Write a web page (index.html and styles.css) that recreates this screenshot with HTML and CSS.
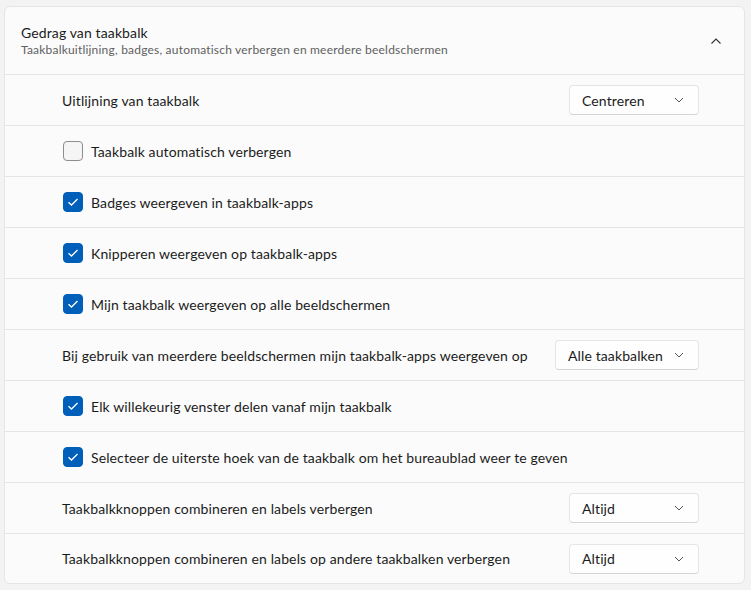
FILE: index.html
```html
<!DOCTYPE html>
<html lang="nl">
<head>
<meta charset="utf-8">
<link rel="stylesheet" href="styles.css">
</head>
<body>
<div class="card">
  <div class="header">
    <div class="htext">
      <div class="title">Gedrag van taakbalk</div>
      <div class="subtitle">Taakbalkuitlijning, badges, automatisch verbergen en meerdere beeldschermen</div>
    </div>
    <svg class="chev-up" width="12" height="8" viewBox="0 0 12 8"><path d="M1.5 6.5 L6 2 L10.5 6.5" fill="none" stroke="#333" stroke-width="1.1"/></svg>
  </div>
  <div class="row">
    <span class="label">Uitlijning van taakbalk</span>
    <div class="dropdown w130"><span>Centreren</span><svg width="10" height="6" viewBox="0 0 10 6"><path d="M1 1 L5 5 L9 1" fill="none" stroke="#555" stroke-width="1"/></svg></div>
  </div>
  <div class="row">
    <span class="cb"></span><span class="clabel">Taakbalk automatisch verbergen</span>
  </div>
  <div class="row">
    <span class="cb on"><svg width="12" height="10" viewBox="0 0 12 10"><path d="M1.5 5.2 L4.5 8 L10.5 2" fill="none" stroke="#fff" stroke-width="1.3"/></svg></span><span class="clabel">Badges weergeven in taakbalk-apps</span>
  </div>
  <div class="row">
    <span class="cb on"><svg width="12" height="10" viewBox="0 0 12 10"><path d="M1.5 5.2 L4.5 8 L10.5 2" fill="none" stroke="#fff" stroke-width="1.3"/></svg></span><span class="clabel">Knipperen weergeven op taakbalk-apps</span>
  </div>
  <div class="row">
    <span class="cb on"><svg width="12" height="10" viewBox="0 0 12 10"><path d="M1.5 5.2 L4.5 8 L10.5 2" fill="none" stroke="#fff" stroke-width="1.3"/></svg></span><span class="clabel">Mijn taakbalk weergeven op alle beeldschermen</span>
  </div>
  <div class="row">
    <span class="label">Bij gebruik van meerdere beeldschermen mijn taakbalk-apps weergeven op</span>
    <div class="dropdown w144"><span>Alle taakbalken</span><svg width="10" height="6" viewBox="0 0 10 6"><path d="M1 1 L5 5 L9 1" fill="none" stroke="#555" stroke-width="1"/></svg></div>
  </div>
  <div class="row">
    <span class="cb on"><svg width="12" height="10" viewBox="0 0 12 10"><path d="M1.5 5.2 L4.5 8 L10.5 2" fill="none" stroke="#fff" stroke-width="1.3"/></svg></span><span class="clabel">Elk willekeurig venster delen vanaf mijn taakbalk</span>
  </div>
  <div class="row">
    <span class="cb on"><svg width="12" height="10" viewBox="0 0 12 10"><path d="M1.5 5.2 L4.5 8 L10.5 2" fill="none" stroke="#fff" stroke-width="1.3"/></svg></span><span class="clabel">Selecteer de uiterste hoek van de taakbalk om het bureaublad weer te geven</span>
  </div>
  <div class="row">
    <span class="label">Taakbalkknoppen combineren en labels verbergen</span>
    <div class="dropdown w130"><span>Altijd</span><svg width="10" height="6" viewBox="0 0 10 6"><path d="M1 1 L5 5 L9 1" fill="none" stroke="#555" stroke-width="1"/></svg></div>
  </div>
  <div class="row">
    <span class="label">Taakbalkknoppen combineren en labels op andere taakbalken verbergen</span>
    <div class="dropdown w130"><span>Altijd</span><svg width="10" height="6" viewBox="0 0 10 6"><path d="M1 1 L5 5 L9 1" fill="none" stroke="#555" stroke-width="1"/></svg></div>
  </div>
</div>
</body>
</html>
```
FILE: styles.css
```css
html, body {
  margin: 0;
  padding: 0;
  background: #f3f3f3;
}
body {
  padding: 6px 6px 6px 4px;
  font-family: "Segoe UI", Lato, "Liberation Sans", sans-serif;
  font-size: 14px;
  letter-spacing: 0.12px;
  color: #1b1b1b;
}
.card {
  width: 739px;
  background: #fbfbfb;
  border: 1px solid #e5e5e5;
  border-radius: 6px;
}
.header {
  height: 67px;
  display: flex;
  align-items: center;
  justify-content: space-between;
  padding: 0 22px 0 16px;
  border-bottom: 1px solid #e5e5e5;
}
.title {
  font-size: 14px;
  line-height: 19px;
}
.subtitle {
  font-size: 12px;
  line-height: 16px;
  letter-spacing: 0.2px;
  color: #606060;
}
.chev-up {
  display: block;
}
.row {
  height: 50px;
  display: flex;
  align-items: center;
  padding: 0 45px 0 57px;
  border-bottom: 1px solid #e5e5e5;
}
.row:last-child {
  border-bottom: none;
  height: 49px;
}
.label {
  flex: 1;
}
.dropdown {
  height: 30px;
  box-sizing: border-box;
  background: #fefefe;
  border: 1px solid #e5e5e5;
  border-bottom-color: #d4d4d4;
  border-radius: 4px;
  display: flex;
  align-items: center;
  justify-content: space-between;
  padding: 0 14px 0 12px;
}
.dropdown svg { display: block; }
.w130 { width: 130px; }
.w144 { width: 144px; }
.cb {
  width: 20px;
  height: 20px;
  box-sizing: border-box;
  border-radius: 4px;
  border: 1px solid #8d8d8d;
  background: #f5f5f5;
  margin-left: 1px;
  margin-right: 8px;
  display: flex;
  align-items: center;
  justify-content: center;
}
.cb.on {
  background: #005fb8;
  border-color: #005fb8;
}
.cb svg { display: block; }
```
